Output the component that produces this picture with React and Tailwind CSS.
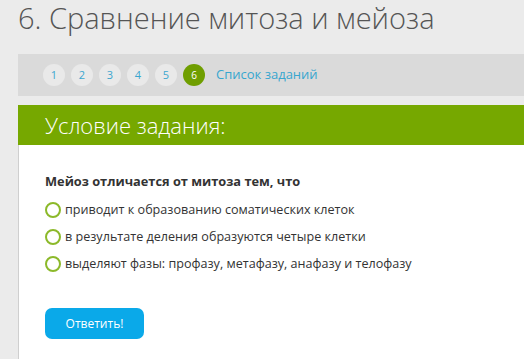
export default function App() {
  const nums = [1, 2, 3, 4, 5];
  const options = [
    "приводит к образованию соматических клеток",
    "в результате деления образуются четыре клетки",
    "выделяют фазы: профазу, метафазу, анафазу и телофазу",
  ];
  return (
    <div className="w-[524px] h-[359px] overflow-hidden bg-[#ebebeb] font-['Open_Sans',sans-serif]">
      <div className="pl-[18px]">
        <h1 className="h-[54px] text-[29px] leading-[36px] font-light text-[#555] whitespace-nowrap">
          6. Сравнение митоза и мейоза
        </h1>
        <div className="h-[42px] bg-[#dadada] flex items-center pl-[25px] gap-[6px]">
          {nums.map((n) => (
            <div
              key={n}
              className="w-[22px] h-[22px] rounded-full bg-[#e9e9e9] flex items-center justify-center text-[11px] text-[#3ba6cf]"
            >
              {n}
            </div>
          ))}
          <div className="w-[22px] h-[22px] rounded-full bg-[#6f9e00] flex items-center justify-center text-[10px] text-white">
            6
          </div>
          <span className="ml-[5px] text-[13px] text-[#37a6cf]">Список заданий</span>
        </div>
        <div className="h-[9px]" />
        <div className="h-[40px] bg-[#76a800] flex items-center pl-[27px]">
          <span className="text-[22px] font-light text-white leading-none">Условие задания:</span>
        </div>
        <div className="bg-white h-[214px] border-l border-[#cfcfcf] pl-[26px] pt-[27px]">
          <p className="text-[12.8px] font-bold text-[#333] leading-[18px]">
            Мейоз отличается от митоза тем, что
          </p>
          <div className="mt-[11px] flex flex-col gap-[9px]">
            {options.map((o) => (
              <div key={o} className="flex items-center h-[18px]">
                <span className="w-[16px] h-[16px] rounded-full border-2 border-[#8cb92a] mr-[4px] shrink-0" />
                <span className="text-[12.6px] text-[#333] leading-[18px] whitespace-nowrap">{o}</span>
              </div>
            ))}
          </div>
          <button className="mt-[35px] w-[99px] h-[31px] rounded-[7px] bg-[#0aa9e9] text-white text-[12px]">
            Ответить!
          </button>
        </div>
      </div>
    </div>
  );
}
